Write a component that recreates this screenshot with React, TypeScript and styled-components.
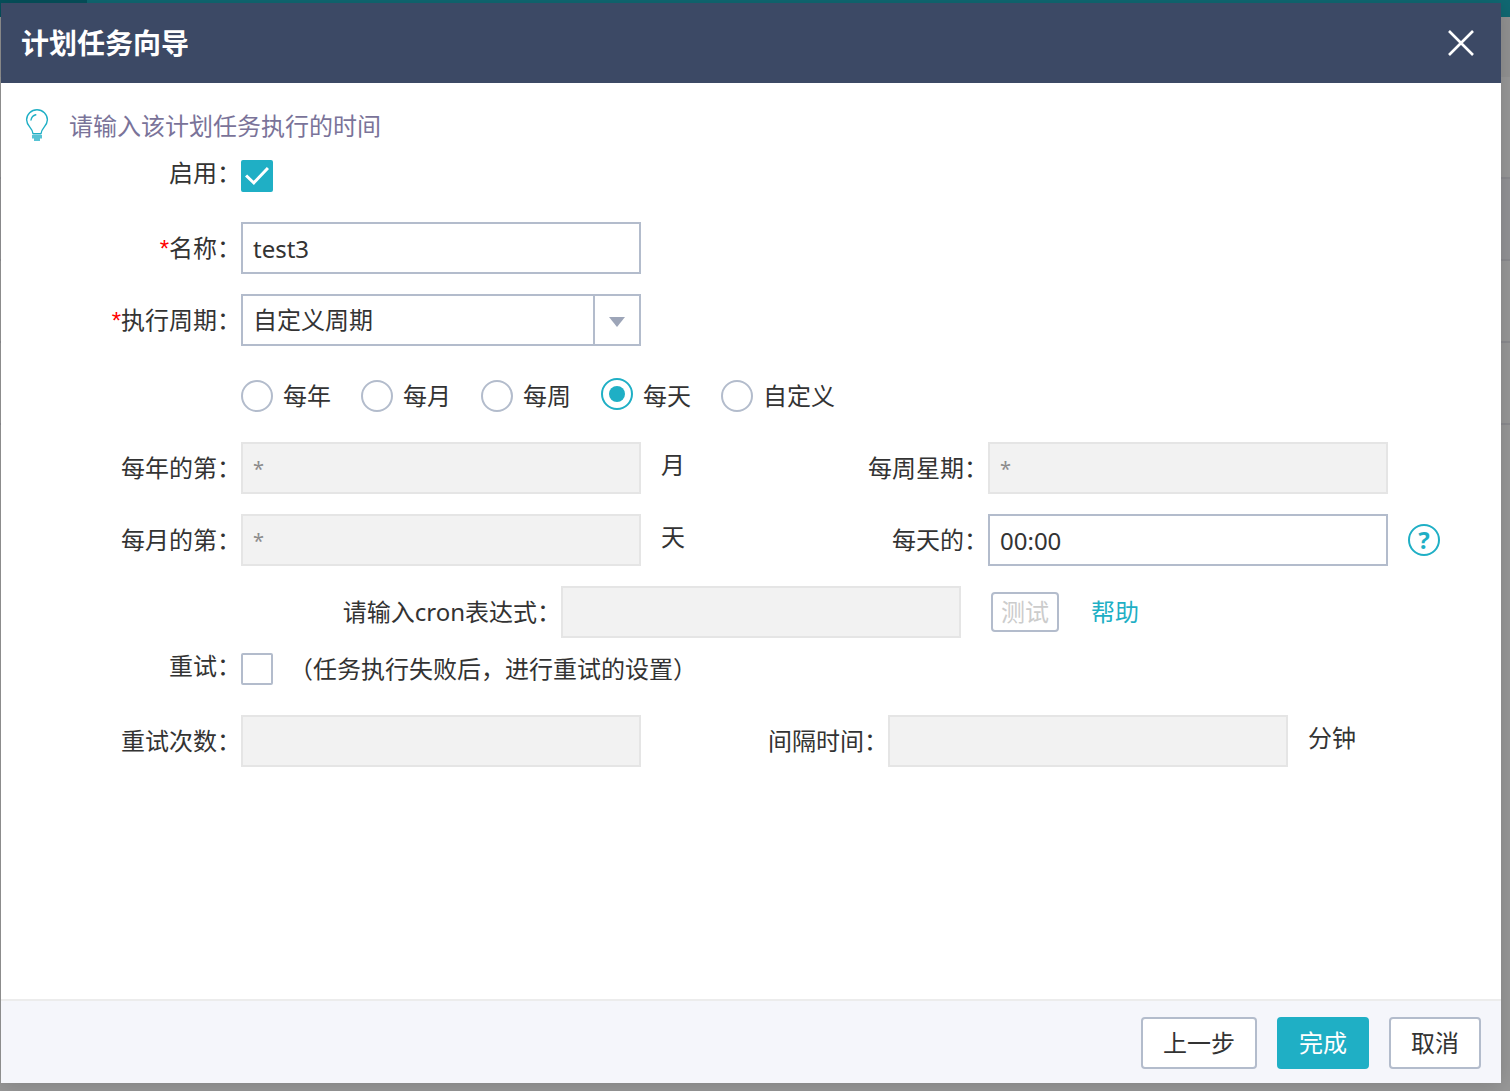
import React, { useState } from "react";
import styled, { createGlobalStyle, css } from "styled-components";

const teal = "#1fafc5";
const line = "#b3bccc";
const ink = "#333333";

const GlobalStyle = createGlobalStyle`
  *, *::before, *::after { box-sizing: border-box; }
  body {
    margin: 0;
    color: ${ink};
    font-family: "Noto Sans", "Noto Sans CJK SC", sans-serif;
    font-size: 24px;
    line-height: 32px;
  }
  button, input, select { font: inherit; color: inherit; margin: 0; }
`;

const Page = styled.div`
  position: relative;
  display: flex;
  min-height: 100vh;
  padding: 3px 9px 8px 1px;
  overflow: hidden;
`;

const Backdrop = styled.div`
  position: absolute;
  inset: 0;
  display: flex;
  flex-direction: column;
  background: #989898;
`;

const TopStrip = styled.div`
  height: 17px;
  background: linear-gradient(to right, #06505b 87px, #106872 87px);
`;

const ToolStrip = styled.div`
  height: 60px;
  background: #929292;
`;

const ListRow = styled.div<{ $height: number; $shaded?: boolean }>`
  height: ${(p) => p.$height}px;
  border-bottom: 2px solid #8b8b8f;
  background: ${(p) => (p.$shaded ? "#939396" : "#989898")};
`;

const Dialog = styled.form`
  position: relative;
  flex: 1;
  min-width: 0;
  display: flex;
  flex-direction: column;
  background: #ffffff;
  box-shadow: 0 2px 20px rgba(0, 0, 0, 0.16);
`;

const Header = styled.header`
  display: flex;
  align-items: center;
  justify-content: space-between;
  height: 80px;
  padding: 0 20px;
  background: #3c4965;
  color: #ffffff;
`;

const Title = styled.h1`
  margin: 0;
  font-size: 28px;
  line-height: 40px;
  font-weight: 700;
`;

const CloseButton = styled.button`
  display: flex;
  align-items: center;
  justify-content: center;
  width: 40px;
  height: 40px;
  padding: 0;
  border: 0;
  background: none;
  cursor: pointer;
`;

const Body = styled.main`
  flex: 1;
  padding: 19px 0 20px;
`;

const Hint = styled.p`
  display: flex;
  align-items: center;
  gap: 20px;
  height: 48px;
  margin: 0;
  padding-left: 24px;
  color: #7a7399;
`;

const Row = styled.div<{ $space?: number }>`
  display: flex;
  align-items: center;
  height: 52px;
  margin-top: ${(p) => p.$space ?? 20}px;
  white-space: nowrap;
`;

const Label = styled.label<{ $width?: number; $raised?: boolean }>`
  flex: none;
  width: ${(p) => p.$width ?? 240}px;
  line-height: 52px;
  text-align: right;
  ${(p) =>
    p.$raised &&
    css`
      align-self: flex-start;
      line-height: 46px;
    `}
`;

const Required = styled.span`
  color: #ff0000;
  font-family: "Liberation Sans", sans-serif;
`;

const TextInput = styled.input`
  flex: none;
  width: 400px;
  height: 52px;
  padding: 0 10px;
  border: 2px solid ${line};
  border-radius: 0;
  background: #ffffff;
  outline: none;

  &:disabled {
    border-color: #e5e5e5;
    background: #f2f2f2;
    color: #8c8c8c;
    font-size: 20px;
  }
`;

const SelectBox = styled.div`
  position: relative;
  flex: none;
  width: 400px;
`;

const Select = styled.select`
  display: block;
  width: 100%;
  height: 52px;
  padding: 0 56px 0 10px;
  border: 2px solid ${line};
  border-radius: 0;
  background: #ffffff;
  appearance: none;
  outline: none;
`;

const SelectArrow = styled.span`
  position: absolute;
  top: 0;
  right: 0;
  display: flex;
  align-items: center;
  justify-content: center;
  width: 48px;
  height: 52px;
  padding-top: 3px;
  border: 2px solid ${line};
  pointer-events: none;

  &::before {
    content: "";
    border: 8px solid transparent;
    border-top: 10px solid #9da5b8;
    border-bottom: 0;
  }
`;

const Unit = styled.span<{ $width?: number }>`
  flex: none;
  align-self: flex-start;
  width: ${(p) => (p.$width ? `${p.$width}px` : "auto")};
  padding-left: 20px;
  line-height: 46px;
`;

const Checkbox = styled.input`
  flex: none;
  appearance: none;
  width: 32px;
  height: 32px;
  border: 2px solid ${line};
  border-radius: 2px;
  background: #ffffff;
  display: grid;
  place-items: center;

  &:checked {
    border-color: ${teal};
    background: ${teal};
  }
  &:checked::before {
    content: "";
    width: 24px;
    height: 18px;
    background: #ffffff;
    clip-path: polygon(0 53%, 9% 41%, 36% 77%, 91% 0, 100% 11%, 37% 100%);
  }
`;

const RadioGroup = styled.div`
  display: flex;
  gap: 30px;
  padding-left: 240px;
`;

const RadioLabel = styled.label`
  display: flex;
  align-items: center;
  gap: 10px;
  height: 52px;
`;

const Radio = styled.input`
  appearance: none;
  display: grid;
  place-items: center;
  width: 32px;
  height: 32px;
  border: 2px solid ${line};
  border-radius: 50%;
  background: #ffffff;

  &:checked {
    margin-bottom: 4px;
    border-color: ${teal};
  }
  &:checked::before {
    content: "";
    width: 16px;
    height: 16px;
    border-radius: 50%;
    background: ${teal};
  }
`;

const HelpButton = styled.button`
  display: flex;
  padding: 0;
  margin-left: 20px;
  border: 0;
  background: none;
  cursor: pointer;
`;

const HelpMark = styled.span`
  display: grid;
  place-items: center;
  width: 32px;
  height: 32px;
  border: 2px solid ${teal};
  border-radius: 50%;
  color: ${teal};
  font-weight: 700;
  line-height: 28px;
`;

const TestButton = styled.button`
  height: 40px;
  padding: 0 8px;
  margin-left: 30px;
  border: 2px solid ${line};
  border-radius: 4px;
  background: #ffffff;
  line-height: 32px;

  &:disabled {
    color: #cccccc;
  }
`;

const HelpLink = styled.a`
  margin-left: 32px;
  color: ${teal};
  text-decoration: none;
`;

const Note = styled.span`
  padding-left: 16px;
`;

const Footer = styled.footer`
  display: flex;
  justify-content: flex-end;
  gap: 20px;
  padding: 16px 20px 14px;
  border-top: 2px solid #ececec;
  background: #f5f6fb;
`;

const FooterButton = styled.button<{ $primary?: boolean }>`
  height: 52px;
  padding: 0 20px;
  border: 2px solid ${(p) => (p.$primary ? teal : line)};
  border-radius: 4px;
  background: ${(p) => (p.$primary ? teal : "#ffffff")};
  color: ${(p) => (p.$primary ? "#ffffff" : ink)};
  cursor: pointer;
`;

const BulbIcon = () => (
  <svg width="24" height="34" viewBox="0 0 24 34" fill="none" aria-hidden="true">
    <path
      d="M8 24.800C7.800 18.500 1.600 17.500 1.600 10.800a10.400 10.100 0 0 1 20.800 0C22.400 17.500 16.200 18.500 16 24.800z"
      stroke={teal}
      strokeWidth="1.400"
      strokeLinejoin="round"
    />
    <path d="M6 11c.5-2.800 2-4.500 4.800-5.200" stroke={teal} strokeWidth="1.400" strokeLinecap="round" />
    <path d="M7 26h10v3.500h-2V32H9v-2.500H7z" fill={teal} fillOpacity=".75" />
  </svg>
);

const CloseIcon = () => (
  <svg width="26" height="26" viewBox="0 0 26 26" aria-hidden="true">
    <path d="M1 1l24 24M25 1L1 25" stroke="#ffffff" strokeWidth="2.600" />
  </svg>
);

const frequencies = ["每年", "每月", "每周", "每天", "自定义"];

export default function App() {
  const [frequency, setFrequency] = useState("每天");

  return (
    <>
      <GlobalStyle />
      <Page>
        <Backdrop aria-hidden="true">
          <TopStrip />
          <ToolStrip />
          <ListRow $height={102} />
          <ListRow $height={82} $shaded />
          <ListRow $height={82} />
          <ListRow $height={82} />
        </Backdrop>
        <Dialog role="dialog" aria-labelledby="title" onSubmit={(e) => e.preventDefault()}>
          <Header>
            <Title id="title">计划任务向导</Title>
            <CloseButton type="button" aria-label="关闭">
              <CloseIcon />
            </CloseButton>
          </Header>
          <Body>
            <Hint>
              <BulbIcon />
              请输入该计划任务执行的时间
            </Hint>
            <Row $space={0}>
              <Label htmlFor="enabled" $raised>启用：</Label>
              <Checkbox id="enabled" type="checkbox" defaultChecked />
            </Row>
            <Row>
              <Label htmlFor="name"><Required>*</Required>名称：</Label>
              <TextInput id="name" type="text" defaultValue="test3" />
            </Row>
            <Row>
              <Label htmlFor="period"><Required>*</Required>执行周期：</Label>
              <SelectBox>
                <Select id="period">
                  <option>自定义周期</option>
                </Select>
                <SelectArrow />
              </SelectBox>
            </Row>
            <Row $space={24}>
              <RadioGroup role="radiogroup" aria-label="执行周期">
                {frequencies.map((f) => (
                  <RadioLabel key={f}>
                    <Radio
                      type="radio"
                      name="frequency"
                      checked={frequency === f}
                      onChange={() => setFrequency(f)}
                    />
                    {f}
                  </RadioLabel>
                ))}
              </RadioGroup>
            </Row>
            <Row>
              <Label htmlFor="month">每年的第：</Label>
              <TextInput id="month" type="text" defaultValue="*" disabled />
              <Unit $width={147}>月</Unit>
              <Label htmlFor="weekday" $width={200}>每周星期：</Label>
              <TextInput id="weekday" type="text" defaultValue="*" disabled />
            </Row>
            <Row>
              <Label htmlFor="day">每月的第：</Label>
              <TextInput id="day" type="text" defaultValue="*" disabled />
              <Unit $width={147}>天</Unit>
              <Label htmlFor="time" $width={200}>每天的：</Label>
              <TextInput id="time" type="text" defaultValue="00:00" />
              <HelpButton type="button" aria-label="说明">
                <HelpMark>?</HelpMark>
              </HelpButton>
            </Row>
            <Row>
              <Label htmlFor="cron" $width={560}>请输入cron表达式：</Label>
              <TextInput id="cron" type="text" disabled />
              <TestButton type="button" disabled>测试</TestButton>
              <HelpLink href="#help">帮助</HelpLink>
            </Row>
            <Row $space={5}>
              <Label htmlFor="retry" $raised>重试：</Label>
              <Checkbox id="retry" type="checkbox" />
              <Note>（任务执行失败后，进行重试的设置）</Note>
            </Row>
            <Row>
              <Label htmlFor="retries">重试次数：</Label>
              <TextInput id="retries" type="text" disabled />
              <Label htmlFor="interval" $width={247}>间隔时间：</Label>
              <TextInput id="interval" type="text" disabled />
              <Unit>分钟</Unit>
            </Row>
          </Body>
          <Footer>
            <FooterButton type="button">上一步</FooterButton>
            <FooterButton type="submit" $primary>完成</FooterButton>
            <FooterButton type="button">取消</FooterButton>
          </Footer>
        </Dialog>
      </Page>
    </>
  );
}
